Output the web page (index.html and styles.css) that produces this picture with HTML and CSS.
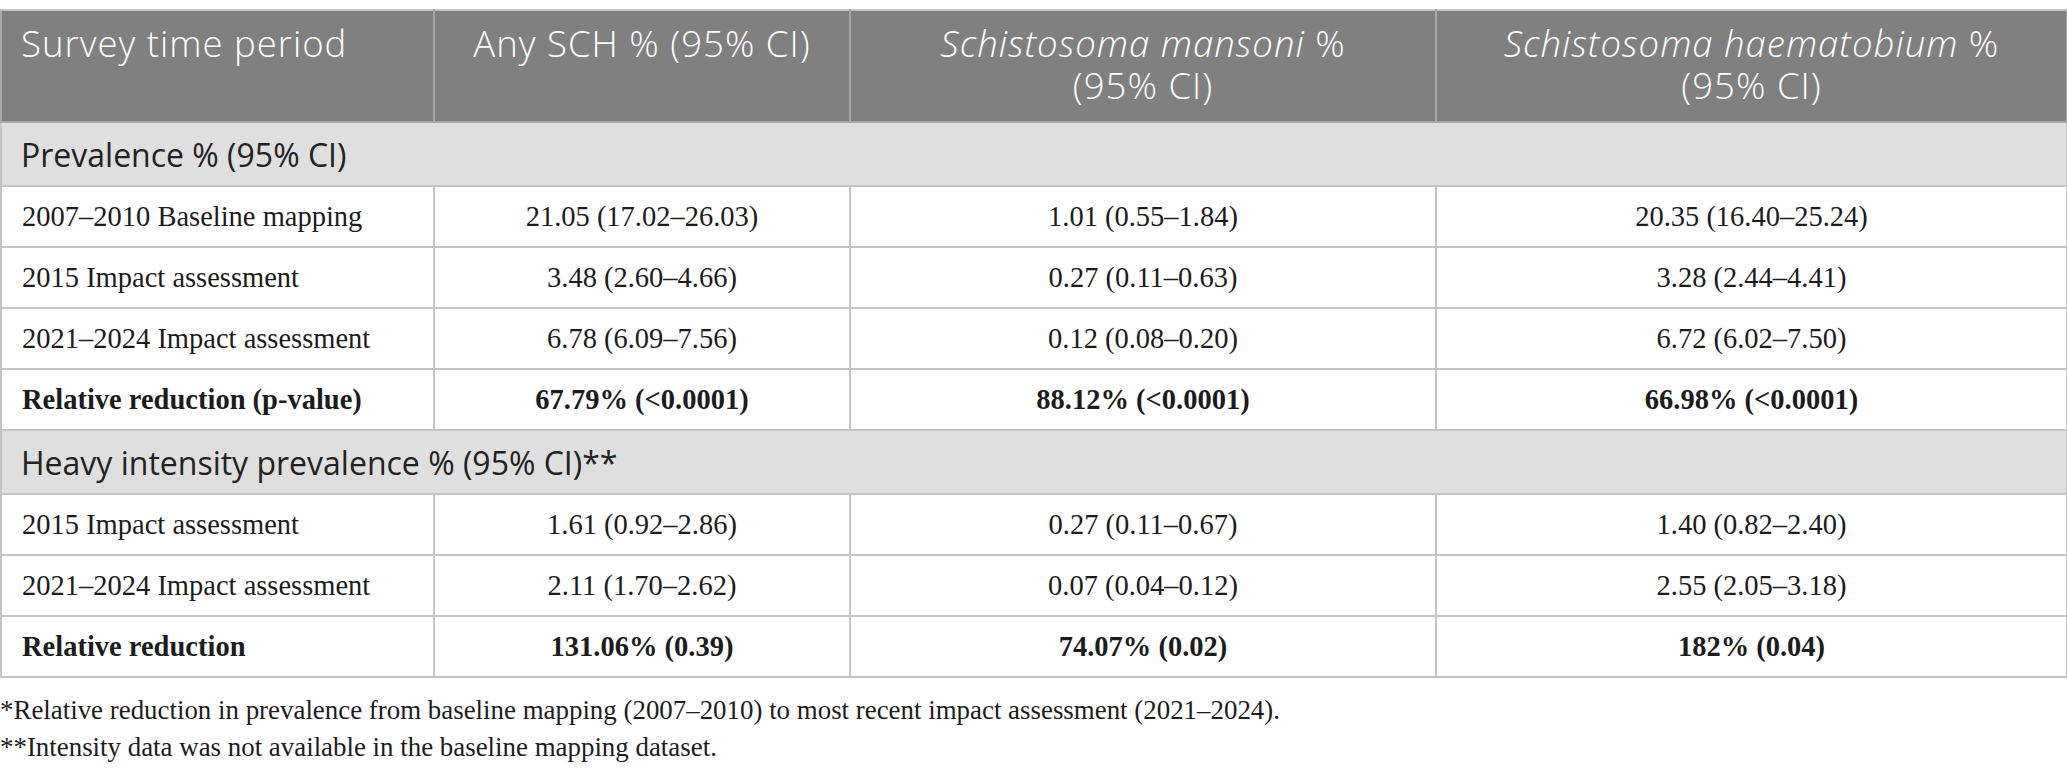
FILE: index.html
```html
<!DOCTYPE html>
<html lang="en">
<head>
<meta charset="utf-8">
<title>Schistosomiasis prevalence</title>
<link rel="stylesheet" href="styles.css">
</head>
<body>
<div class="page">
  <table class="data">
    <colgroup>
      <col class="c1"><col class="c2"><col class="c3"><col class="c4">
    </colgroup>
    <thead>
      <tr class="head">
        <th class="first"><span class="hl">Survey time period</span></th>
        <th><span class="hl">Any SCH % (95% CI)</span></th>
        <th><span class="hl"><em>Schistosoma mansoni</em> %</span><span class="hl">(95% CI)</span></th>
        <th><span class="hl"><em>Schistosoma haematobium</em> %</span><span class="hl">(95% CI)</span></th>
      </tr>
    </thead>
    <tbody>
      <tr class="section"><td colspan="4">Prevalence % (95% CI)</td></tr>
      <tr class="row"><td class="first">2007–2010 Baseline mapping</td><td>21.05 (17.02–26.03)</td><td>1.01 (0.55–1.84)</td><td>20.35 (16.40–25.24)</td></tr>
      <tr class="row"><td class="first">2015 Impact assessment</td><td>3.48 (2.60–4.66)</td><td>0.27 (0.11–0.63)</td><td>3.28 (2.44–4.41)</td></tr>
      <tr class="row"><td class="first">2021–2024 Impact assessment</td><td>6.78 (6.09–7.56)</td><td>0.12 (0.08–0.20)</td><td>6.72 (6.02–7.50)</td></tr>
      <tr class="row bold"><td class="first">Relative reduction (p-value)</td><td>67.79% (&lt;0.0001)</td><td>88.12% (&lt;0.0001)</td><td>66.98% (&lt;0.0001)</td></tr>
      <tr class="section"><td colspan="4">Heavy intensity prevalence % (95% CI)**</td></tr>
      <tr class="row"><td class="first">2015 Impact assessment</td><td>1.61 (0.92–2.86)</td><td>0.27 (0.11–0.67)</td><td>1.40 (0.82–2.40)</td></tr>
      <tr class="row"><td class="first">2021–2024 Impact assessment</td><td>2.11 (1.70–2.62)</td><td>0.07 (0.04–0.12)</td><td>2.55 (2.05–3.18)</td></tr>
      <tr class="row bold"><td class="first">Relative reduction</td><td>131.06% (0.39)</td><td>74.07% (0.02)</td><td>182% (0.04)</td></tr>
    </tbody>
  </table>
  <div class="notes">
    <p>*Relative reduction in prevalence from baseline mapping (2007–2010) to most recent impact assessment (2021–2024).</p>
    <p>**Intensity data was not available in the baseline mapping dataset.</p>
  </div>
</div>
</body>
</html>
```

FILE: styles.css
```css
html, body {
  margin: 0;
  padding: 0;
  background: #ffffff;
}

.page {
  padding-top: 9px;
  width: 2067px;
}

.data {
  border-collapse: collapse;
  width: 2066px;
  table-layout: fixed;
  font-family: "Liberation Serif", "Times New Roman", serif;
  color: #1c1c1c;
}

.c1 { width: 433px; }
.c2 { width: 416px; }
.c3 { width: 586px; }
.c4 { width: 631px; }

.data th,
.data td {
  border: 2px solid #c4c4c4;
  padding: 0;
}

.head th {
  background: #7f807f;
  color: #ffffff;
  font-family: "Open Sans", "DejaVu Sans", sans-serif;
  font-weight: 300;
  font-size: 36.5px;
  letter-spacing: 1px;
  text-align: center;
  vertical-align: top;
  height: 99px;
  padding-top: 11px;
  border-color: #a9a9a9;
  border-top-color: #c4c4c4;
}

.head .hl {
  display: block;
  height: 42px;
  line-height: 42px;
  white-space: nowrap;
}

.head th em {
  font-style: italic;
}

.head th.first {
  text-align: left;
  padding-left: 19px;
}

.section td {
  background: #e0dfe0;
  font-family: "Open Sans", "DejaVu Sans", sans-serif;
  font-weight: 400;
  font-size: 32px;
  letter-spacing: 0px;
  color: #222222;
  height: 62px;
  padding-left: 19px;
  text-align: left;
}

.row td {
  height: 59px;
  font-size: 28.5px;
  text-align: center;
  vertical-align: middle;
}

.row td.first {
  text-align: left;
  padding-left: 20px;
}

.row.bold td {
  font-weight: 700;
}

.notes {
  font-family: "Liberation Serif", "Times New Roman", serif;
  font-size: 26.9px;
  color: #1c1c1c;
  padding-top: 14px;
}

.notes p {
  margin: 0;
  line-height: 37px;
}
```
